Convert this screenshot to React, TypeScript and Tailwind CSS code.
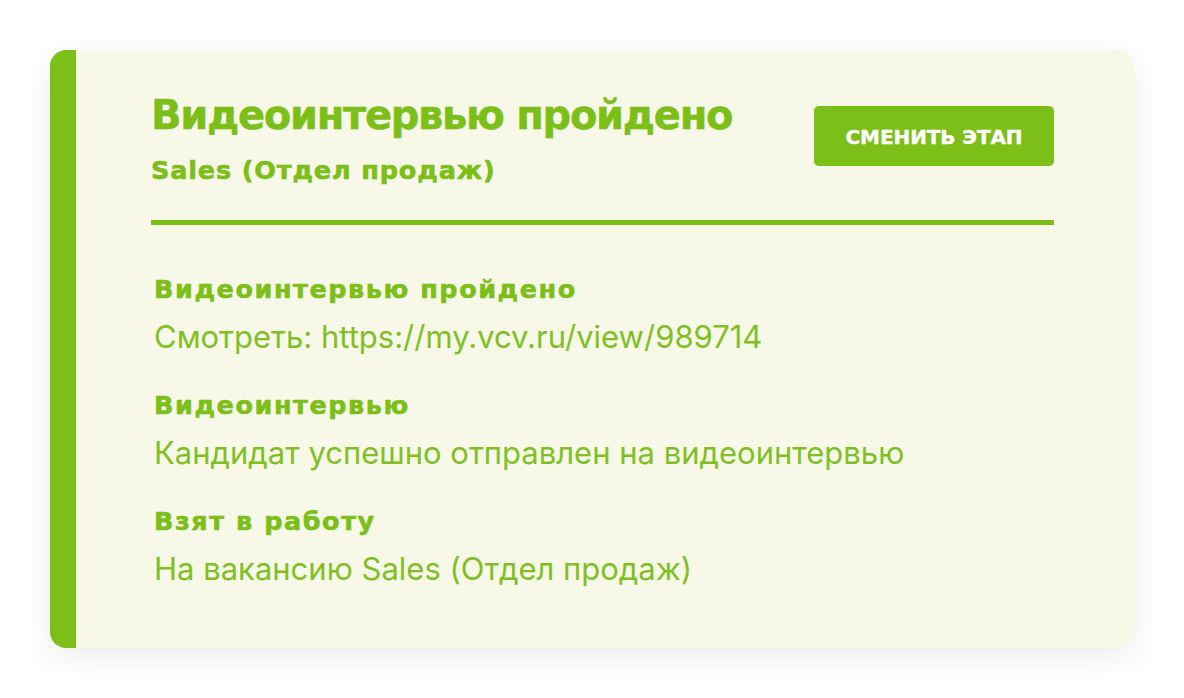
import React from "react";

const items = [
  { h: "Видеоинтервью пройдено", t: "Смотреть: https://my.vcv.ru/view/989714" },
  { h: "Видеоинтервью", t: "Кандидат успешно отправлен на видеоинтервью" },
  { h: "Взят в работу", t: "На вакансию Sales (Отдел продаж)" },
];

export default function App() {
  return (
    <div className="w-[1184px] h-[698px] bg-white pt-[50px] pl-[50px] font-['Inter',sans-serif]">
      <div className="w-[1084px] h-[598px] flex rounded-[16px] overflow-hidden bg-[#f7f8e8] shadow-[0_8px_32px_rgba(0,0,0,0.08)]">
        <div className="w-[26px] bg-[#7cbf18] shrink-0" />
        <div className="flex-1 pl-[75px] pr-[80px] pt-[41px]">
          <div className="flex justify-between items-start">
            <div className="font-['DejaVu_Sans',sans-serif] font-bold text-[#7cbf18]">
              <div className="text-[40px] leading-[48px] tracking-[-1.3px] [-webkit-text-stroke:0.5px_#7cbf18]">Видеоинтервью пройдено</div>
              <div className="text-[25.5px] leading-[30px] mt-[16px] tracking-[0.85px] [-webkit-text-stroke:0.6px_#7cbf18]">Sales (Отдел продаж)</div>
            </div>
            <button className="mt-[15px] w-[240px] h-[60px] rounded-[5px] bg-[#7cbf18] text-white font-['DejaVu_Sans',sans-serif] font-bold text-[20px] leading-[24px] pt-[2px] uppercase tracking-[-0.1px] [-webkit-text-stroke:0.4px_#ffffff]">Сменить этап</button>
          </div>
          <div className="h-[5px] bg-[#7cbf18] mt-[34.5px]" />
          <div className="pl-[3px] pt-[49px] flex flex-col gap-[32.5px]">
            {items.map((it) => (
              <div key={it.h} className="flex flex-col gap-[13.5px]">
                <div className="font-['DejaVu_Sans',sans-serif] font-bold text-[25.5px] leading-[30px] text-[#7cbf18] tracking-[1.55px] [-webkit-text-stroke:0.6px_#7cbf18]">{it.h}</div>
                <div className="text-[31px] leading-[40px] text-[#80c024]">{it.t}</div>
              </div>
            ))}
          </div>
        </div>
      </div>
    </div>
  );
}
